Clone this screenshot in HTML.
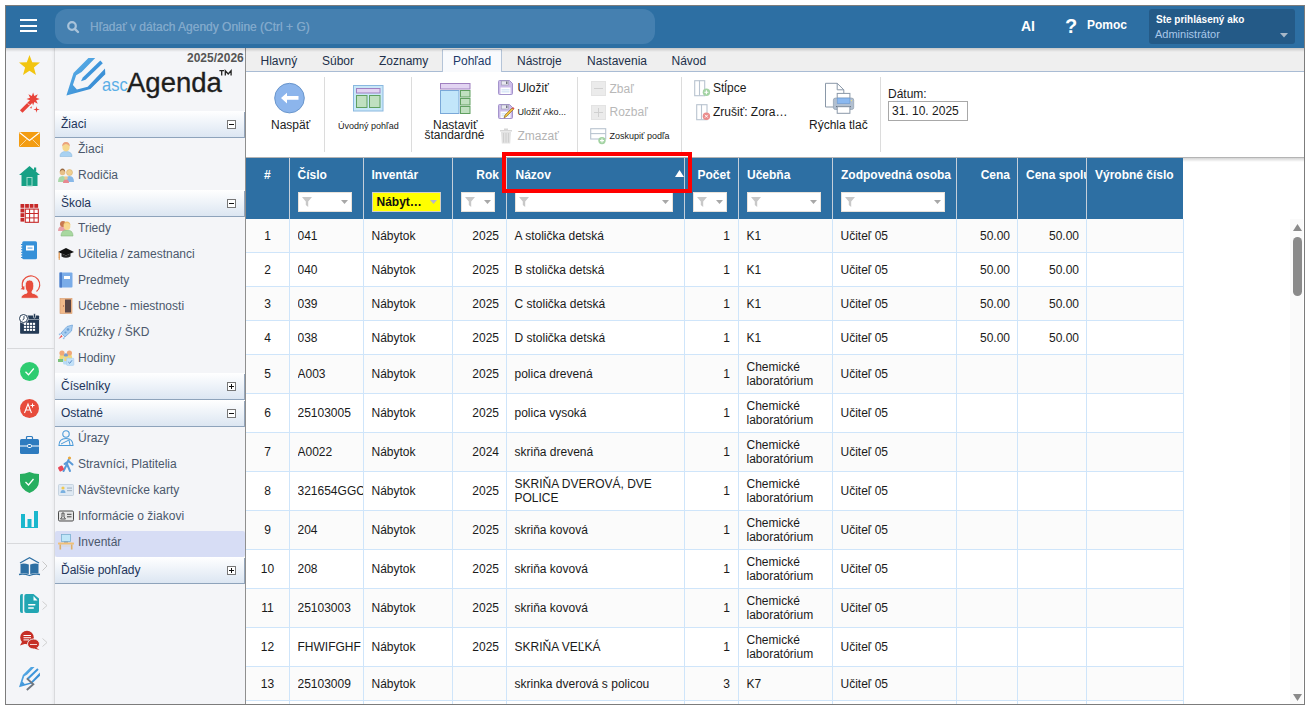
<!DOCTYPE html><html><head><meta charset="utf-8"><style>
*{box-sizing:border-box;margin:0;padding:0}
html,body{width:1310px;height:710px;overflow:hidden;background:#fff;font-family:"Liberation Sans",sans-serif;font-size:12px;color:#222}
.a{position:absolute;white-space:nowrap}
#frame{position:absolute;left:5px;top:5px;width:1300px;height:700px;border:1px solid #7c7c7c;overflow:hidden;background:#fff}
svg{position:absolute;overflow:visible}
</style></head><body><div id="frame"><div class="a" style="left:0px;top:0px;width:1298px;height:42px;background:#2d6fa3"></div>
<div class="a" style="left:14px;top:13px;width:17px;height:2px;background:#fff"></div>
<div class="a" style="left:14px;top:19px;width:17px;height:2px;background:#fff"></div>
<div class="a" style="left:14px;top:24px;width:17px;height:2px;background:#fff"></div>
<div class="a" style="left:49px;top:3px;width:600px;height:35px;background:#4580b0;border-radius:12px"></div>
<svg style="left:61px;top:15px" width="12" height="12" viewBox="0 0 12 12"><circle cx="5" cy="5" r="3.8" fill="none" stroke="#a9c3da" stroke-width="2.2"/><line x1="7.8" y1="7.8" x2="11" y2="11" stroke="#a9c3da" stroke-width="2.4" stroke-linecap="round"/></svg>
<div class="a" style="left:84.00px;top:13.00px;font-size:12px;line-height:16px;color:#80a8cb;text-shadow:0 0 .4px #80a8cb">Hľadať v dátach Agendy Online (Ctrl + G)</div>
<div class="a" style="left:1015.00px;top:11.00px;font-size:14px;line-height:18px;color:#fff;font-weight:bold;">AI</div>
<div class="a" style="left:1059.00px;top:8.00px;font-size:20px;line-height:24px;color:#fff;font-weight:bold;">?</div>
<div class="a" style="left:1081.00px;top:11.00px;font-size:12px;line-height:16px;color:#fff;font-weight:bold;">Pomoc</div>
<div class="a" style="left:1143px;top:3px;width:146px;height:35px;background:#245a87;border-radius:3px"></div>
<div class="a" style="left:1150.00px;top:6.80px;font-size:10px;line-height:14px;color:#fff;font-weight:bold;">Ste prihlásený ako</div>
<div class="a" style="left:1149.00px;top:20.80px;font-size:11px;line-height:15px;color:#a9c8ea;">Administrátor</div>
<svg style="left:1274px;top:27px" width="8" height="5" viewBox="0 0 8 5"><path d="M0 0H8L4 4.5Z" fill="#a8b8c8"/></svg>
<div class="a" style="left:0px;top:42px;width:48px;height:656px;background:#f4f5f8"></div>
<div class="a" style="left:45px;top:42px;width:3px;height:656px;background:linear-gradient(90deg,rgba(0,0,0,0),rgba(0,0,0,.035))"></div>
<div class="a" style="left:48px;top:42px;width:1px;height:656px;background:#d9dadd"></div>
<div class="a" style="left:1px;top:342px;width:47px;height:1px;background:#d8d9dc"></div>
<div class="a" style="left:1px;top:537px;width:47px;height:1px;background:#d8d9dc"></div>
<svg style="left:13px;top:49px" width="21" height="20" viewBox="0 0 21 20"><path d="M10.5 0 L13.2 7.2 L21 7.6 L14.9 12.5 L17 20 L10.5 15.8 L4 20 L6.1 12.5 L0 7.6 L7.8 7.2Z" fill="#f2c511"/></svg>
<svg style="left:13px;top:86px" width="22" height="22" viewBox="0 0 22 22"><path d="M14.10 0.40 L15.36 3.95 L18.77 2.33 L17.15 5.74 L20.70 7.00 L17.15 8.26 L18.77 11.67 L15.36 10.05 L14.10 13.60 L12.84 10.05 L9.43 11.67 L11.05 8.26 L7.50 7.00 L11.05 5.74 L9.43 2.33 L12.84 3.95Z" fill="#e8433a"/><path d="M17.50 14.30 L18.14 16.86 L20.70 17.50 L18.14 18.14 L17.50 20.70 L16.86 18.14 L14.30 17.50 L16.86 16.86Z" fill="#e8433a"/><path d="M11 15.5 L13.2 14.2 L12.2 16.8Z" fill="#e8433a"/><path d="M2.2 19.5 L12.5 9.2" stroke="#e8433a" stroke-width="3.6" stroke-linecap="butt"/><path d="M8.8 11.4 L10.7 13.3" stroke="#f4f5f8" stroke-width="0.9"/></svg>
<svg style="left:13px;top:126px" width="21" height="15" viewBox="0 0 21 15"><rect x="0" y="0" width="21" height="15" fill="#f39c12"/><path d="M0.5 0.5 L10.5 8.5 L20.5 0.5" stroke="#fff" stroke-width="1.1" fill="none"/><path d="M0.5 14.5 L7.5 7.5 M20.5 14.5 L13.5 7.5" stroke="#fde3b8" stroke-width=".8" fill="none"/></svg>
<svg style="left:13px;top:160px" width="21" height="20" viewBox="0 0 21 20"><path d="M10.5 0 L21 9 L18.5 9 L18.5 20 L2.5 20 L2.5 9 L0 9Z" fill="#16a085"/><rect x="15" y="1.5" width="2.2" height="4" fill="#16a085"/><rect x="8" y="11.5" width="5" height="8.5" fill="none" stroke="#9fdccc" stroke-width="1"/></svg>
<svg style="left:14px;top:198px" width="19" height="19" viewBox="0 0 19 19"><g fill="#c62828"><rect x="0.5" y="0" width="3.8" height="3.8"/><rect x="5.1" y="0" width="3.8" height="3.8"/><rect x="9.7" y="0" width="3.8" height="3.8"/><rect x="14.3" y="0" width="3.8" height="3.8"/><rect x="0.5" y="4.6" width="3.8" height="3.8"/><rect x="0.5" y="9.2" width="3.8" height="3.8"/><rect x="0.5" y="13.8" width="3.8" height="3.8"/></g><rect x="5.3" y="5.1" width="13" height="13.2" fill="#fff" stroke="#c62828" stroke-width="1.1"/><path d="M9.6 5 V18.3 M14 5 V18.3 M5.3 9.5 H18.3 M5.3 13.9 H18.3" stroke="#c62828" stroke-width="1"/></svg>
<svg style="left:15px;top:235px" width="17" height="19" viewBox="0 0 17 19"><rect x="1.2" y="0.3" width="14.8" height="18" rx="1.5" fill="#3590d8"/><rect x="0" y="3.0" width="3" height="1" fill="#3590d8"/><rect x="0" y="5.6" width="3" height="1" fill="#3590d8"/><rect x="0" y="8.2" width="3" height="1" fill="#3590d8"/><rect x="0" y="10.8" width="3" height="1" fill="#3590d8"/><rect x="0" y="13.4" width="3" height="1" fill="#3590d8"/><rect x="0" y="16.0" width="3" height="1" fill="#3590d8"/><rect x="5" y="4.5" width="8" height="5" fill="#fff"/><rect x="6.5" y="6.3" width="5" height="1.6" fill="#8fc0ea"/></svg>
<svg style="left:14px;top:270px" width="20" height="23" viewBox="0 0 20 23"><path d="M3.6 13.5 A8.8 8.8 0 1 1 16.5 15.5" stroke="#e74c3c" stroke-width="1.2" fill="none"/><path d="M0.5 13.3 L4.5 13.5 L4.3 9.8Z" fill="#e74c3c"/><path d="M5.2 10 Q5.2 4 9.5 4 Q13.8 4 13.8 10 Q13.8 13.5 12 15.5 L12 17 Q18.5 18.5 18.5 22.3 L1 22.3 Q1 18.5 7 17 L7 15.5 Q5.2 13.5 5.2 10Z" fill="#e74c3c" stroke="#f4f5f8" stroke-width=".8"/></svg>
<svg style="left:13px;top:307px" width="21" height="21" viewBox="0 0 21 21"><rect x="1.1" y="2.5" width="19" height="18.3" rx="0.8" fill="#243a55"/><rect x="1" y="6" width="19.5" height="1" fill="#8a96a5"/><rect x="4.9" y="9.8" width="2.2" height="2.1" fill="#fff"/><rect x="7.9" y="9.8" width="2.2" height="2.1" fill="#fff"/><rect x="10.9" y="9.8" width="2.2" height="2.1" fill="#fff"/><rect x="13.9" y="9.8" width="2.2" height="2.1" fill="#fff"/><rect x="4.9" y="12.8" width="2.2" height="2.1" fill="#fff"/><rect x="7.9" y="12.8" width="2.2" height="2.1" fill="#fff"/><rect x="10.9" y="12.8" width="2.2" height="2.1" fill="#fff"/><rect x="13.9" y="12.8" width="2.2" height="2.1" fill="#fff"/><rect x="4.9" y="15.8" width="2.2" height="2.1" fill="#fff"/><rect x="7.9" y="15.8" width="2.2" height="2.1" fill="#fff"/><rect x="10.9" y="15.8" width="2.2" height="2.1" fill="#fff"/><rect x="13.9" y="15.8" width="2.2" height="2.1" fill="#fff"/><rect x="14.5" y="0.6" width="2" height="4.5" rx="1" fill="#243a55" stroke="#fff" stroke-width=".6"/><circle cx="4.5" cy="5.5" r="5" fill="#fff"/><circle cx="4.5" cy="5.5" r="4" fill="#fff" stroke="#243a55" stroke-width="1"/><path d="M5 3 V6 L3.5 7" stroke="#243a55" stroke-width=".9" fill="none"/></svg>
<svg style="left:14px;top:356px" width="19" height="19" viewBox="0 0 19 19"><circle cx="9.5" cy="9.5" r="9.5" fill="#2ecc71"/><path d="M5.5 9.8 L8.5 12.8 L13.8 6.5" stroke="#fff" stroke-width="1.3" fill="none"/></svg>
<svg style="left:14px;top:393px" width="19" height="19" viewBox="0 0 19 19"><circle cx="9.5" cy="9.5" r="9.5" fill="#e74c3c"/><path d="M4.5 14 L8 5 L11.5 14 M6 11 H10" stroke="#fff" stroke-width="1.1" fill="none"/><path d="M12.5 4.5 V8.5 M10.5 6.5 H14.5" stroke="#fff" stroke-width="1" fill="none"/></svg>
<svg style="left:14px;top:430px" width="19" height="18" viewBox="0 0 19 18"><path d="M6.5 3.5 V1.5 Q6.5 0.5 7.5 0.5 H11.5 Q12.5 0.5 12.5 1.5 V3.5" stroke="#2e7bbf" stroke-width="1.2" fill="none"/><rect x="0" y="3" width="19" height="15" rx="1.5" fill="#2e7bbf"/><path d="M0 10 H19" stroke="#fff" stroke-width="1"/><rect x="7.5" y="8.5" width="4" height="3" rx="1.2" fill="#2e7bbf" stroke="#fff" stroke-width="1"/></svg>
<svg style="left:14px;top:466px" width="19" height="21" viewBox="0 0 19 21"><path d="M9.5 0 Q14 2 19 2 L19 9 Q19 17 9.5 21 Q0 17 0 9 L0 2 Q5 2 9.5 0Z" fill="#27ae60"/><path d="M5.5 10 L8.5 13 L13.5 7" stroke="#fff" stroke-width="1.3" fill="none"/></svg>
<svg style="left:15px;top:505px" width="17" height="17" viewBox="0 0 17 17"><rect x="0" y="3" width="4" height="14" fill="#1ab7cd"/><rect x="6.5" y="8" width="4" height="9" fill="#1ab7cd"/><rect x="13" y="0" width="4" height="17" fill="#1ab7cd"/><rect x="0" y="16" width="17" height="1" fill="#1ab7cd"/></svg>
<svg style="left:13px;top:551px" width="21" height="19" viewBox="0 0 21 19"><path d="M1 6 L10.5 0.8 L20 6" stroke="#2d6fa3" stroke-width="1.2" fill="none"/><path d="M1.5 7 Q5 6 9.8 7.5 V17 Q5 15.8 1.5 16.5Z" fill="#2d6fa3"/><path d="M19.5 7 Q16 6 11.2 7.5 V17 Q16 15.8 19.5 16.5Z" fill="#2d6fa3"/><path d="M0 17.5 Q5 16.5 10.5 18.5 Q16 16.5 21 17.5" stroke="#2d6fa3" stroke-width="1.3" fill="none"/></svg>
<svg style="left:36px;top:555px" width="6" height="10" viewBox="0 0 6 10"><path d="M0.5 0.5 L5 5 L0.5 9.5" stroke="#c8c8c8" stroke-width="1" fill="none"/></svg>
<svg style="left:14px;top:588px" width="20" height="19" viewBox="0 0 20 19"><path d="M2.8 0 H1.8 Q0 0 0 2 V17 Q0 19 1.8 19 H2.8Z" fill="#22a6b3"/><path d="M4.3 2 Q4.3 0 6.3 0 H13.5 L19 4.5 V17 Q19 19 17 19 H6.3 Q4.3 19 4.3 17Z" fill="#22a6b3"/><path d="M13.5 2 V6.5 H17.5Z" fill="#fff"/><rect x="8" y="10" width="7.5" height="1.5" rx=".7" fill="#fff"/><rect x="8" y="13.3" width="6" height="1.5" rx=".7" fill="#fff"/></svg>
<svg style="left:36px;top:595px" width="6" height="9" viewBox="0 0 6 9"><path d="M0.5 0.5 L5 4.5 L0.5 8.5" stroke="#d0d0d0" stroke-width="1" fill="none"/></svg>
<svg style="left:14px;top:625px" width="20" height="20" viewBox="0 0 20 20"><circle cx="7" cy="6.5" r="6.8" fill="#c62f26"/><path d="M0 14.5 L2.5 10 L6 12.5Z" fill="#c62f26"/><ellipse cx="13.5" cy="13" rx="6" ry="5" fill="#c62f26" stroke="#f4f5f8" stroke-width=".9"/><path d="M19.5 19 L16 16.5 L14 17.5Z" fill="#c62f26"/><rect x="3.5" y="4" width="7.5" height="1" fill="#fff"/><rect x="3.5" y="6.2" width="7.5" height="1" fill="#fff"/><rect x="3.5" y="8.4" width="5.5" height="1" fill="#fff"/><rect x="10" y="13" width="7" height="1" fill="#fff" opacity=".8"/></svg>
<svg style="left:36px;top:632px" width="6" height="9" viewBox="0 0 6 9"><path d="M0.5 0.5 L5 4.5 L0.5 8.5" stroke="#d0d0d0" stroke-width="1" fill="none"/></svg>
<svg style="left:6px;top:657px" width="32" height="32" viewBox="0 0 32 32"><g transform="translate(3.544 0.656) scale(0.54)"><path d="M6.4 43.6 L13.5 21 L28.4 6.1 L35.2 6.1 L21.6 20 L16.2 23.2 L12.9 33.1 L16.9 37.5 L27.7 34.8 L45 16.6 L45.3 22.3 L30.4 36.9 Z" fill="url(#pg)"/><path d="M40.3 8.6 L42.8 11.2 L25.5 27.8 L21 29.2 L22.8 25.4 Z" fill="#3d95db"/></g><path d="M14.8 15.4 L21.3 21.3 L14.8 27" stroke="#6f7780" stroke-width="1.9" fill="none"/></svg>
<div class="a" style="left:49px;top:42px;width:190px;height:656px;background:#f4f5f8"></div>
<div class="a" style="left:239px;top:42px;width:1px;height:656px;background:#8f8f8f"></div>
<div class="a" style="left:181.00px;top:43.80px;font-size:12px;line-height:16px;color:#555;font-weight:bold;">2025/2026</div>
<svg style="left:54px;top:46px" width="50" height="46" viewBox="0 0 50 46"><defs><linearGradient id="pg" x1="0" y1="0" x2="1" y2="1"><stop offset="0" stop-color="#62b6ec"/><stop offset="1" stop-color="#2a7fcc"/></linearGradient></defs><path d="M6.4 43.6 L13.5 21 L28.4 6.1 L35.2 6.1 L21.6 20 L16.2 23.2 L12.9 33.1 L16.9 37.5 L27.7 34.8 L45 16.6 L45.3 22.3 L30.4 36.9 Z" fill="url(#pg)"/><path d="M40.3 8.6 L42.8 11.2 L25.5 27.8 L21 29.2 L22.8 25.4 Z" fill="#3d95db"/></svg>
<div class="a" style="left:96.00px;top:69.35px;font-size:16.5px;line-height:20.5px;color:#5aaee6;transform:scaleY(1.08);transform-origin:0 80%">asc</div>
<div class="a" style="left:121.00px;top:59.55px;font-size:28.5px;line-height:32.5px;color:#1e1e1e;transform:scaleX(0.965);transform-origin:0 0;-webkit-text-stroke:0.35px #1e1e1e">Agenda</div>
<svg style="left:213px;top:64px" width="14" height="6" viewBox="0 0 14 6"><path d="M0.4 0.6 H5 M2.7 0.6 V5.4" stroke="#222" stroke-width="1.3"/><path d="M6.3 5.4 V0.8 L9.2 4 L12.1 0.8 V5.4" stroke="#222" stroke-width="1.3" fill="none"/></svg>
<div class="a" style="left:49px;top:105px;width:190px;height:27px;border-bottom:1px solid #8ea3bb;background:linear-gradient(#ffffff,#dce6f2)"></div>
<div class="a" style="left:55.00px;top:109.80px;font-size:12px;line-height:16px;color:#22345a;">Žiaci</div>
<div class="a" style="left:238px;top:106px;width:1px;height:26px;background:#95a6bb"></div>
<div class="a" style="left:221px;top:114px;width:9px;height:9px;border:1px solid #777;background:#fff"></div>
<div class="a" style="left:223px;top:118px;width:5px;height:1px;background:#111"></div>
<div class="a" style="left:72.00px;top:134.70px;font-size:12px;line-height:16px;color:#4b586c;">Žiaci</div>
<svg style="left:52px;top:135px" width="16" height="16" viewBox="0 0 16 16"><path d="M2 15.5 Q2 10.5 8 10.5 Q14 10.5 14 15.5Z" fill="#a9d2f2" stroke="#8cb8de" stroke-width=".6"/><ellipse cx="8" cy="6" rx="3.6" ry="4.4" fill="#f6d88e"/><path d="M4.3 5.5 Q4 1 8 1 Q12 1 11.7 5.5 Q10.5 3 8 3 Q5.5 3 4.3 5.5Z" fill="#eaa27e"/></svg>
<div class="a" style="left:72.00px;top:160.70px;font-size:12px;line-height:16px;color:#4b586c;">Rodičia</div>
<svg style="left:52px;top:161px" width="16" height="16" viewBox="0 0 16 16"><path d="M0 15 Q0 9 4.5 9 Q9 9 9 15Z" fill="#a8d8a8"/><circle cx="4.5" cy="5.5" r="2.8" fill="#e8c088"/><path d="M1.8 5 Q2 1.5 4.5 1.5 Q7 1.5 7.2 5 Q6 3 4.5 3 Q3 3 1.8 5Z" fill="#9a6a40"/><path d="M7 15 Q7 9 11.5 9 Q16 9 16 15Z" fill="#88b8e8"/><circle cx="11.5" cy="5.5" r="3" fill="#f0d090" stroke="#d8b070" stroke-width=".6"/><path d="M5 16 Q5 12.5 8 12.5 Q11 12.5 11 16Z" fill="#e88890"/><circle cx="8" cy="11" r="1.8" fill="#f0c890"/></svg>
<div class="a" style="left:49px;top:184px;width:190px;height:27px;border-bottom:1px solid #8ea3bb;background:linear-gradient(#ffffff,#dce6f2)"></div>
<div class="a" style="left:55.00px;top:188.80px;font-size:12px;line-height:16px;color:#22345a;">Škola</div>
<div class="a" style="left:238px;top:185px;width:1px;height:26px;background:#95a6bb"></div>
<div class="a" style="left:221px;top:193px;width:9px;height:9px;border:1px solid #777;background:#fff"></div>
<div class="a" style="left:223px;top:197px;width:5px;height:1px;background:#111"></div>
<div class="a" style="left:72.00px;top:213.70px;font-size:12px;line-height:16px;color:#4b586c;">Triedy</div>
<svg style="left:52px;top:214px" width="16" height="16" viewBox="0 0 16 16"><path d="M0 11 Q0 6 5 6 Q9 6 9 11Z" fill="#e8a0a8"/><circle cx="5" cy="4" r="3" fill="#c87850"/><path d="M3 16 Q3 10 9 10 Q15 10 15 16Z" fill="#a8d8a0" stroke="#88b880" stroke-width=".6"/><ellipse cx="9" cy="6" rx="3.4" ry="4" fill="#f8d890"/><path d="M5.6 5 Q6 1.5 9 1.5 Q12 1.5 12.4 5 Q11 3 9 3 Q7 3 5.6 5Z" fill="#f0c070"/></svg>
<div class="a" style="left:72.00px;top:239.70px;font-size:12px;line-height:16px;color:#4b586c;">Učitelia / zamestnanci</div>
<svg style="left:52px;top:240px" width="16" height="16" viewBox="0 0 16 16"><path d="M0 6 L8 2 L16 6 L8 9.5Z" fill="#111"/><path d="M3.5 7.5 V10.5 Q8 13 12.5 10.5 V7.5 L8 9.5Z" fill="#222"/><path d="M1.2 6.5 V11.5" stroke="#e09040" stroke-width="1.2"/><path d="M0.6 11 L1.8 11 L1.6 14 L0.8 14Z" fill="#e09040"/></svg>
<div class="a" style="left:72.00px;top:265.70px;font-size:12px;line-height:16px;color:#4b586c;">Predmety</div>
<svg style="left:52px;top:266px" width="16" height="16" viewBox="0 0 16 16"><rect x="1.5" y="0.5" width="13" height="15" rx="1" fill="#7aace8"/><rect x="1.5" y="0.5" width="2.5" height="15" fill="#4a7cc8"/><rect x="6" y="4" width="6" height="3" fill="#fff"/></svg>
<div class="a" style="left:72.00px;top:291.70px;font-size:12px;line-height:16px;color:#4b586c;">Učebne - miestnosti</div>
<svg style="left:52px;top:292px" width="16" height="16" viewBox="0 0 16 16"><rect x="2" y="0.5" width="12" height="15" fill="#f2b98a" stroke="#d89868" stroke-width=".6"/><rect x="7" y="1.5" width="6" height="13" fill="#5a4545"/><rect x="5" y="7" width="1" height="2" fill="#c08060"/></svg>
<div class="a" style="left:72.00px;top:317.70px;font-size:12px;line-height:16px;color:#4b586c;">Krúžky / ŠKD</div>
<svg style="left:52px;top:318px" width="16" height="16" viewBox="0 0 16 16"><path d="M14.5 1 L9 2.5 L3 9 L7 13 L13.5 7Z" fill="#a8cdf0" stroke="#6aa0d8" stroke-width=".7"/><path d="M3 9 L0.5 10 L2 11.5Z M7 13 L6 15.5 L4.5 14Z" fill="#88b8e8"/><circle cx="10" cy="5.5" r="1.3" fill="#6aa0d8"/><circle cx="7.5" cy="8.5" r="1.1" fill="#6aa0d8"/><path d="M3.5 11 L0.5 15 L4.5 12.5Z" fill="#e84848"/></svg>
<div class="a" style="left:72.00px;top:343.70px;font-size:12px;line-height:16px;color:#4b586c;">Hodiny</div>
<svg style="left:52px;top:344px" width="16" height="16" viewBox="0 0 16 16"><rect x="1.5" y="4.5" width="5" height="6" rx="2" fill="#f2d97a"/><rect x="9" y="4.5" width="5" height="6" rx="2" fill="#f2d97a"/><circle cx="4" cy="3" r="2.6" fill="#f0a878"/><circle cx="11.4" cy="3" r="2.6" fill="#f0a878"/><rect x="0" y="9" width="6" height="3" fill="#7cc27c"/><rect x="5" y="7.5" width="6" height="7" rx="1.5" fill="#b8dcf6"/><circle cx="7.9" cy="5.3" r="2" fill="#7a9cc8"/><rect x="6.3" y="6.5" width="3.2" height="4.5" fill="#f2d97a"/><rect x="8.6" y="8.2" width="7.2" height="7.2" rx=".8" fill="#c4e2f8" stroke="#a8cdee" stroke-width=".6"/><path d="M10.3 12 L11.7 13.3 L14 10.3" stroke="#5a8ac8" stroke-width="1" fill="none"/></svg>
<div class="a" style="left:49px;top:367px;width:190px;height:27px;border-bottom:1px solid #8ea3bb;background:linear-gradient(#ffffff,#dce6f2)"></div>
<div class="a" style="left:55.00px;top:371.80px;font-size:12px;line-height:16px;color:#22345a;">Číselníky</div>
<div class="a" style="left:238px;top:368px;width:1px;height:26px;background:#95a6bb"></div>
<div class="a" style="left:221px;top:376px;width:9px;height:9px;border:1px solid #777;background:#fff"></div>
<div class="a" style="left:223px;top:380px;width:5px;height:1px;background:#111"></div>
<div class="a" style="left:225px;top:378px;width:1px;height:5px;background:#111"></div>
<div class="a" style="left:49px;top:394px;width:190px;height:27px;border-bottom:1px solid #8ea3bb;background:linear-gradient(#ffffff,#dce6f2)"></div>
<div class="a" style="left:55.00px;top:398.80px;font-size:12px;line-height:16px;color:#22345a;">Ostatné</div>
<div class="a" style="left:238px;top:395px;width:1px;height:26px;background:#95a6bb"></div>
<div class="a" style="left:221px;top:403px;width:9px;height:9px;border:1px solid #777;background:#fff"></div>
<div class="a" style="left:223px;top:407px;width:5px;height:1px;background:#111"></div>
<div class="a" style="left:72.00px;top:423.70px;font-size:12px;line-height:16px;color:#4b586c;">Úrazy</div>
<svg style="left:52px;top:424px" width="16" height="16" viewBox="0 0 16 16"><circle cx="8" cy="4" r="3.2" fill="none" stroke="#4a9ad8" stroke-width="1.1"/><path d="M1 15.5 Q1 8.5 8 8.5 Q15 8.5 15 15.5Z" fill="none" stroke="#4a9ad8" stroke-width="1.1"/><path d="M3 14 L11 10 L12 15" fill="none" stroke="#4a9ad8" stroke-width="1"/></svg>
<div class="a" style="left:72.00px;top:449.70px;font-size:12px;line-height:16px;color:#4b586c;">Stravníci, Platitelia</div>
<svg style="left:52px;top:450px" width="16" height="16" viewBox="0 0 16 16"><circle cx="11.5" cy="2" r="1.6" fill="#e8a840"/><path d="M10.5 4 L8 10 L5.5 15 M9 8 L12 15 M10.5 5 L14.5 8.5 M10 5.5 L6.5 8" stroke="#5a9ad8" stroke-width="2" fill="none" stroke-linecap="round"/><rect x="0.5" y="10" width="5" height="5" rx="1.2" transform="rotate(-30 3 12.5)" fill="#e84858"/></svg>
<div class="a" style="left:72.00px;top:475.70px;font-size:12px;line-height:16px;color:#4b586c;">Návštevnícke karty</div>
<svg style="left:52px;top:476px" width="16" height="16" viewBox="0 0 16 16"><rect x="0.5" y="2.5" width="15" height="11" rx="1" fill="#dfe9f3" stroke="#b8c8d8" stroke-width=".7"/><circle cx="5" cy="6" r="1.6" fill="#f0c850"/><path d="M2.5 11 Q2.5 8 5 8 Q7.5 8 7.5 11Z" fill="#7ab0e0"/><rect x="9" y="5.5" width="5" height="1.2" fill="#a8b8c8"/><rect x="9" y="8" width="5" height="1.2" fill="#a8b8c8"/></svg>
<div class="a" style="left:72.00px;top:501.70px;font-size:12px;line-height:16px;color:#4b586c;">Informácie o žiakovi</div>
<svg style="left:52px;top:502px" width="16" height="16" viewBox="0 0 16 16"><rect x="0.5" y="3" width="15" height="10" rx="1.2" fill="#e6e6e6" stroke="#4a4a4a" stroke-width="1"/><path d="M4 5 H6 V9 L7.5 11 H2.5 L4 9Z" fill="none" stroke="#444" stroke-width=".9"/><rect x="9" y="5.8" width="4.5" height="1" fill="#444"/><rect x="9" y="8.3" width="4.5" height="1" fill="#444"/></svg>
<div class="a" style="left:49px;top:525px;width:190px;height:26px;background:#d7ddf5;border-radius:2px"></div>
<div class="a" style="left:72.00px;top:527.70px;font-size:12px;line-height:16px;color:#4b586c;">Inventár</div>
<svg style="left:52px;top:528px" width="16" height="16" viewBox="0 0 16 16"><rect x="3.5" y="0.5" width="9" height="7" fill="#bfe6f8" stroke="#7ab0d0" stroke-width=".8"/><rect x="6" y="7.5" width="4" height="1.3" fill="#8aa0b0"/><rect x="0" y="8.5" width="16" height="2" rx=".6" fill="#f0c078"/><rect x="1.5" y="10.5" width="1.6" height="5" fill="#e0b068"/><rect x="12.9" y="10.5" width="1.6" height="5" fill="#e0b068"/><rect x="3" y="11.5" width="10" height="1" fill="#d8d8d8"/></svg>
<div class="a" style="left:49px;top:551px;width:190px;height:27px;border-bottom:1px solid #8ea3bb;background:linear-gradient(#ffffff,#dce6f2)"></div>
<div class="a" style="left:55.00px;top:555.80px;font-size:12px;line-height:16px;color:#22345a;">Ďalšie pohľady</div>
<div class="a" style="left:238px;top:552px;width:1px;height:26px;background:#95a6bb"></div>
<div class="a" style="left:221px;top:560px;width:9px;height:9px;border:1px solid #777;background:#fff"></div>
<div class="a" style="left:223px;top:564px;width:5px;height:1px;background:#111"></div>
<div class="a" style="left:225px;top:562px;width:1px;height:5px;background:#111"></div>
<div class="a" style="left:240px;top:42px;width:1058px;height:23px;background:#efefef"></div>
<div class="a" style="left:240px;top:65px;width:1058px;height:1px;background:#a9bcd4"></div>
<div class="a" style="left:436px;top:43px;width:60px;height:23px;background:#f8fafd;border:1px solid #b4c4d8;border-bottom:none"></div>
<div class="a" style="left:254.50px;top:47.00px;font-size:12px;line-height:16px;color:#22304a;">Hlavný</div>
<div class="a" style="left:316.00px;top:47.00px;font-size:12px;line-height:16px;color:#22304a;">Súbor</div>
<div class="a" style="left:373.00px;top:47.00px;font-size:12px;line-height:16px;color:#22304a;">Zoznamy</div>
<div class="a" style="left:447.00px;top:47.00px;font-size:12px;line-height:16px;color:#1c3a6a;">Pohľad</div>
<div class="a" style="left:511.00px;top:47.00px;font-size:12px;line-height:16px;color:#22304a;">Nástroje</div>
<div class="a" style="left:581.00px;top:47.00px;font-size:12px;line-height:16px;color:#22304a;">Nastavenia</div>
<div class="a" style="left:665.50px;top:47.00px;font-size:12px;line-height:16px;color:#22304a;">Návod</div>
<div class="a" style="left:240px;top:66px;width:1058px;height:85px;background:#fff"></div>
<div class="a" style="left:240px;top:151px;width:1058px;height:1px;background:#b4b4b4"></div>
<div class="a" style="left:240px;top:152px;width:1058px;height:4px;background:linear-gradient(rgba(0,0,0,.17),rgba(0,0,0,0))"></div>
<div class="a" style="left:318px;top:71px;width:1px;height:75px;background:#dcdcdc"></div>
<div class="a" style="left:405px;top:71px;width:1px;height:75px;background:#dcdcdc"></div>
<div class="a" style="left:571px;top:71px;width:1px;height:75px;background:#dcdcdc"></div>
<div class="a" style="left:675px;top:71px;width:1px;height:75px;background:#dcdcdc"></div>
<div class="a" style="left:874px;top:71px;width:1px;height:75px;background:#dcdcdc"></div>
<svg style="left:268px;top:76px" width="32" height="33" viewBox="0 0 32 33"><g transform="translate(0 .6)"><circle cx="15.5" cy="15.5" r="14.8" fill="#8cb5ec" stroke="#6a96cc" stroke-width="1"/><path d="M7 15.5 L13 10.2 V13.5 H24.5 V17.2 H13 V20.8Z" fill="#fff"/></g></svg>
<div class="a" style="left:265.00px;top:110.50px;font-size:12px;line-height:16px;color:#222;">Naspäť</div>
<svg style="left:347px;top:79px" width="31" height="26" viewBox="0 0 31 26"><rect x="0.5" y="0.5" width="29.5" height="25.5" fill="#c9e8f8" stroke="#8ab8e0" stroke-width="1"/><rect x="3.5" y="3.5" width="23.5" height="4.5" fill="#e2d4f2" stroke="#a080c0" stroke-width="1"/><rect x="3.5" y="10.5" width="10.5" height="12" fill="#c0e0c0" stroke="#60a060" stroke-width="1"/><rect x="16.5" y="10.5" width="10.5" height="12" fill="#c0e0c0" stroke="#60a060" stroke-width="1"/></svg>
<div class="a" style="left:332.00px;top:114.00px;font-size:9px;line-height:13px;color:#222;">Úvodný pohľad</div>
<svg style="left:434px;top:77px" width="31" height="32" viewBox="0 0 31 32"><rect x="0.5" y="0.5" width="29.5" height="5.5" fill="#e2d4f2" stroke="#a080c0" stroke-width="1"/><rect x="0.5" y="7.5" width="18.5" height="23" fill="#c2e6fa" stroke="#7aa8d8" stroke-width="1"/><rect x="20.5" y="7.5" width="9.5" height="6.5" fill="#c0e0c0" stroke="#60a060" stroke-width="1"/><rect x="20.5" y="15.5" width="9.5" height="6.5" fill="#c0e0c0" stroke="#60a060" stroke-width="1"/><rect x="20.5" y="23.5" width="9.5" height="7" fill="#c0e0c0" stroke="#60a060" stroke-width="1"/></svg>
<div class="a" style="left:427.00px;top:110.50px;font-size:12px;line-height:16px;color:#222;">Nastaviť</div>
<div class="a" style="left:418.50px;top:120.70px;font-size:12px;line-height:16px;color:#222;">štandardné</div>
<svg style="left:492px;top:74px" width="16" height="16" viewBox="0 0 16 16"><path d="M0.5 1.5 Q0.5 0.5 1.5 0.5 H11.5 L14.5 3.5 V13.5 Q14.5 14.5 13.5 14.5 H1.5 Q0.5 14.5 0.5 13.5Z" fill="#cbbbe8" stroke="#a494cc" stroke-width="1"/><rect x="3.5" y="1" width="7" height="4" fill="#e8e8f0" stroke="#9a9ab0" stroke-width=".6"/><rect x="8" y="1.5" width="1.5" height="2.5" fill="#707080"/><rect x="2.5" y="7.5" width="10" height="6.5" fill="#fff"/><rect x="3.5" y="9.5" width="8" height=".8" fill="#b8d4f0"/><rect x="3.5" y="11.5" width="8" height=".8" fill="#b8d4f0"/></svg>
<div class="a" style="left:511.50px;top:74.00px;font-size:12px;line-height:16px;color:#1a1a1a;">Uložiť</div>
<svg style="left:492px;top:98px" width="16" height="16" viewBox="0 0 16 16"><path d="M0.5 1.5 Q0.5 0.5 1.5 0.5 H11.5 L14.5 3.5 V13.5 Q14.5 14.5 13.5 14.5 H1.5 Q0.5 14.5 0.5 13.5Z" fill="#cbbbe8" stroke="#a494cc" stroke-width="1"/><rect x="3.5" y="1" width="7" height="4" fill="#e8e8f0" stroke="#9a9ab0" stroke-width=".6"/><rect x="8" y="1.5" width="1.5" height="2.5" fill="#707080"/><rect x="2.5" y="7.5" width="10" height="6.5" fill="#fff"/><rect x="3.5" y="9.5" width="8" height=".8" fill="#b8d4f0"/><rect x="3.5" y="11.5" width="8" height=".8" fill="#b8d4f0"/><path d="M6 14 L7 11 L14 4 L15.5 5.5 L8.5 12.5Z" fill="#f0c040" stroke="#806020" stroke-width=".6"/><path d="M14 4 L15 3 L16.5 4.5 L15.5 5.5Z" fill="#e05050"/></svg>
<div class="a" style="left:511.50px;top:99.50px;font-size:9px;line-height:13px;color:#1a1a1a;">Uložiť Ako...</div>
<svg style="left:493px;top:122px" width="14" height="16" viewBox="0 0 14 16"><rect x="1" y="2" width="12" height="1.5" fill="#d6d6d6"/><rect x="5" y="0.5" width="4" height="1.5" fill="#d6d6d6"/><path d="M2 4 H12 L11.2 15.5 H2.8Z" fill="#e2e2e2"/><path d="M4.5 5 V14.5 M7 5 V14.5 M9.5 5 V14.5" stroke="#cacaca" stroke-width=".8"/></svg>
<div class="a" style="left:511.50px;top:122.00px;font-size:12px;line-height:16px;color:#b3b3b3;">Zmazať</div>
<div class="a" style="left:585px;top:75px;width:15px;height:15px;background:#ebebeb;border:1px solid #e3e3e3"></div>
<div class="a" style="left:588px;top:82px;width:9px;height:1px;background:#d0d0d0"></div>
<div class="a" style="left:603.50px;top:74.60px;font-size:12px;line-height:16px;color:#b8b8b8;">Zbaľ</div>
<div class="a" style="left:585px;top:99px;width:15px;height:15px;background:#ebebeb;border:1px solid #e3e3e3"></div>
<div class="a" style="left:588px;top:106px;width:9px;height:1px;background:#d0d0d0"></div>
<div class="a" style="left:592px;top:102px;width:1px;height:9px;background:#d0d0d0"></div>
<div class="a" style="left:603.50px;top:98.20px;font-size:12px;line-height:16px;color:#b8b8b8;">Rozbaľ</div>
<svg style="left:584px;top:122px" width="17" height="17" viewBox="0 0 17 17"><rect x="0.7" y="0.7" width="15" height="10.3" fill="#fff" stroke="#b9c4d0" stroke-width="1.1"/><path d="M0.5 5.6 H15.7" stroke="#b9c4d0" stroke-width="1.1"/><circle cx="12" cy="12.6" r="3.7" fill="#a3d3a3"/><path d="M12 10.6 V14.6 M10 12.6 H14" stroke="#fff" stroke-width="1.1"/></svg>
<div class="a" style="left:603.50px;top:123.50px;font-size:9px;line-height:13px;color:#1a1a1a;">Zoskupiť podľa</div>
<svg style="left:688px;top:74px" width="17" height="17" viewBox="0 0 17 17"><rect x="0.7" y="0.7" width="10" height="15" fill="#fff" stroke="#b9c4d0" stroke-width="1.1"/><path d="M5.5 0.5 V15.5" stroke="#b9c4d0" stroke-width="1.1"/><circle cx="12.4" cy="12.2" r="3.7" fill="#a3d3a3"/><path d="M12.4 10.2 V14.2 M10.4 12.2 H14.4" stroke="#fff" stroke-width="1.1"/></svg>
<div class="a" style="left:707.00px;top:73.50px;font-size:12px;line-height:16px;color:#1a1a1a;">Stĺpce</div>
<svg style="left:690px;top:98px" width="16" height="17" viewBox="0 0 16 17"><rect x="0.7" y="0.7" width="10.3" height="15" fill="#fff" stroke="#b9c4d0" stroke-width="1.1"/><path d="M5.5 0.5 V15.5" stroke="#b9c4d0" stroke-width="1.1"/><circle cx="10.4" cy="12.2" r="3.7" fill="#ea8c8c"/><path d="M9 10.8 L11.8 13.6 M11.8 10.8 L9 13.6" stroke="#fff" stroke-width="1"/></svg>
<div class="a" style="left:707.00px;top:98.00px;font-size:12px;line-height:16px;color:#1a1a1a;">Zrušiť: Zora…</div>
<svg style="left:818px;top:76px" width="31" height="32" viewBox="0 0 31 32"><path d="M1.5 1.3 H13.2 L19.8 7.8 V25 H1.5Z" fill="#fff" stroke="#8a98a8" stroke-width="1"/><path d="M13.2 1.3 V7.8 H19.8" fill="none" stroke="#8a98a8" stroke-width="1"/><rect x="13.2" y="11.4" width="12.7" height="5" fill="#fff" stroke="#8a98a8" stroke-width="1"/><rect x="9.4" y="16.1" width="20.3" height="11.4" rx="2" fill="#b1bfd0" stroke="#95a3b3" stroke-width=".8"/><rect x="13.2" y="16.1" width="12.7" height="5.4" fill="#8ab8f0" stroke="#6a98d0" stroke-width=".6"/><rect x="12" y="24" width="15" height="1" fill="#606a78"/><rect x="13.2" y="24.7" width="12.7" height="6.6" fill="#fff" stroke="#8a98a8" stroke-width="1"/><circle cx="27.4" cy="18.6" r=".7" fill="#f0e080"/></svg>
<div class="a" style="left:803.00px;top:111.30px;font-size:12px;line-height:16px;color:#1a1a1a;">Rýchla tlač</div>
<div class="a" style="left:882.00px;top:79.50px;font-size:12px;line-height:16px;color:#1a1a1a;">Dátum:</div>
<div class="a" style="left:882px;top:95px;width:80px;height:20px;background:#fff;border:1px solid #a8a8a8"></div>
<div class="a" style="left:886.00px;top:96.70px;font-size:12px;line-height:16px;color:#1a1a1a;">31. 10. 2025</div>
<div class="a" style="left:240px;top:152px;width:937px;height:61px;background:#2d6fa3"></div>
<div class="a" style="left:283px;top:152px;width:1px;height:61px;background:#c4cfda"></div>
<div class="a" style="left:357px;top:152px;width:1px;height:61px;background:#c4cfda"></div>
<div class="a" style="left:446px;top:152px;width:1px;height:61px;background:#c4cfda"></div>
<div class="a" style="left:500px;top:152px;width:1px;height:61px;background:#c4cfda"></div>
<div class="a" style="left:678px;top:152px;width:1px;height:61px;background:#c4cfda"></div>
<div class="a" style="left:732px;top:152px;width:1px;height:61px;background:#c4cfda"></div>
<div class="a" style="left:826px;top:152px;width:1px;height:61px;background:#c4cfda"></div>
<div class="a" style="left:950px;top:152px;width:1px;height:61px;background:#c4cfda"></div>
<div class="a" style="left:1011px;top:152px;width:1px;height:61px;background:#c4cfda"></div>
<div class="a" style="left:1080px;top:152px;width:1px;height:61px;background:#c4cfda"></div>
<div class="a" style="left:258.00px;top:160.80px;font-size:12px;line-height:16px;color:#fff;font-weight:bold;">#</div>
<div class="a" style="left:291.50px;top:160.80px;font-size:12px;line-height:16px;color:#fff;font-weight:bold;">Číslo</div>
<div class="a" style="left:365.50px;top:160.80px;font-size:12px;line-height:16px;color:#fff;font-weight:bold;">Inventár</div>
<div class="a" style="left:446.00px;top:160.80px;width:47px;text-align:right;font-size:12px;line-height:16px;color:#fff;font-weight:bold;">Rok</div>
<div class="a" style="left:509.50px;top:160.80px;font-size:12px;line-height:16px;color:#fff;font-weight:bold;">Názov</div>
<svg style="left:669px;top:164px" width="9" height="7" viewBox="0 0 9 7"><path d="M0 7 L4.5 0 L9 7Z" fill="#fff"/></svg>
<div class="a" style="left:691.50px;top:160.80px;font-size:12px;line-height:16px;color:#fff;font-weight:bold;">Počet</div>
<div class="a" style="left:741.00px;top:160.80px;font-size:12px;line-height:16px;color:#fff;font-weight:bold;">Učebňa</div>
<div class="a" style="left:835.00px;top:160.80px;font-size:12px;line-height:16px;color:#fff;font-weight:bold;">Zodpovedná osoba</div>
<div class="a" style="left:950.00px;top:160.80px;width:54px;text-align:right;font-size:12px;line-height:16px;color:#fff;font-weight:bold;">Cena</div>
<div class="a" style="left:1020.00px;top:160.80px;width:60px;text-align:left;font-size:12px;line-height:16px;color:#fff;font-weight:bold;overflow:hidden;">Cena spolu</div>
<div class="a" style="left:1089.00px;top:160.80px;font-size:12px;line-height:16px;color:#fff;font-weight:bold;">Výrobné číslo</div>
<div class="a" style="left:292px;top:186px;width:54px;height:20px;background:#fff;border:1px solid #e9e2da"></div>
<svg style="left:296px;top:191px" width="10" height="10" viewBox="0 0 10 10"><path d="M0 0 H10 L6.2 4.5 V10 L3.8 8 V4.5Z" fill="#c8c8c8"/></svg>
<svg style="left:335px;top:194px" width="7" height="4" viewBox="0 0 7 4"><path d="M0 0 H7 L3.5 4Z" fill="#a8a8a8"/></svg>
<div class="a" style="left:366px;top:186px;width:69px;height:20px;background:#ffff00;border:1px solid #d3cfc8"></div>
<div class="a" style="left:370.50px;top:187.80px;font-size:12px;line-height:16px;color:#111;font-weight:bold;">Nábyt…</div>
<svg style="left:424px;top:194px" width="7" height="4" viewBox="0 0 7 4"><path d="M0 0 H7 L3.5 4Z" fill="#b6b6c6"/></svg>
<div class="a" style="left:455px;top:186px;width:34px;height:20px;background:#fff;border:1px solid #e9e2da"></div>
<svg style="left:459px;top:191px" width="10" height="10" viewBox="0 0 10 10"><path d="M0 0 H10 L6.2 4.5 V10 L3.8 8 V4.5Z" fill="#c8c8c8"/></svg>
<svg style="left:478px;top:194px" width="7" height="4" viewBox="0 0 7 4"><path d="M0 0 H7 L3.5 4Z" fill="#a8a8a8"/></svg>
<div class="a" style="left:509px;top:186px;width:158px;height:20px;background:#fff;border:1px solid #e9e2da"></div>
<svg style="left:513px;top:191px" width="10" height="10" viewBox="0 0 10 10"><path d="M0 0 H10 L6.2 4.5 V10 L3.8 8 V4.5Z" fill="#c8c8c8"/></svg>
<svg style="left:656px;top:194px" width="7" height="4" viewBox="0 0 7 4"><path d="M0 0 H7 L3.5 4Z" fill="#a8a8a8"/></svg>
<div class="a" style="left:687px;top:186px;width:34px;height:20px;background:#fff;border:1px solid #e9e2da"></div>
<svg style="left:691px;top:191px" width="10" height="10" viewBox="0 0 10 10"><path d="M0 0 H10 L6.2 4.5 V10 L3.8 8 V4.5Z" fill="#c8c8c8"/></svg>
<svg style="left:710px;top:194px" width="7" height="4" viewBox="0 0 7 4"><path d="M0 0 H7 L3.5 4Z" fill="#a8a8a8"/></svg>
<div class="a" style="left:741px;top:186px;width:74px;height:20px;background:#fff;border:1px solid #e9e2da"></div>
<svg style="left:745px;top:191px" width="10" height="10" viewBox="0 0 10 10"><path d="M0 0 H10 L6.2 4.5 V10 L3.8 8 V4.5Z" fill="#c8c8c8"/></svg>
<svg style="left:804px;top:194px" width="7" height="4" viewBox="0 0 7 4"><path d="M0 0 H7 L3.5 4Z" fill="#a8a8a8"/></svg>
<div class="a" style="left:835px;top:186px;width:104px;height:20px;background:#fff;border:1px solid #e9e2da"></div>
<svg style="left:839px;top:191px" width="10" height="10" viewBox="0 0 10 10"><path d="M0 0 H10 L6.2 4.5 V10 L3.8 8 V4.5Z" fill="#c8c8c8"/></svg>
<svg style="left:928px;top:194px" width="7" height="4" viewBox="0 0 7 4"><path d="M0 0 H7 L3.5 4Z" fill="#a8a8a8"/></svg>
<div class="a" style="left:496px;top:146px;width:190px;height:41px;border:4px solid #ff0000"></div>
<div class="a" style="left:240px;top:213px;width:937px;height:33px;background:#fbfbfb"></div>
<div class="a" style="left:240px;top:246px;width:938px;height:1px;background:#cfe5fa"></div>
<div class="a" style="left:240.00px;top:221.80px;width:43px;text-align:center;font-size:12px;line-height:16px;color:#1a1a1a;">1</div>
<div class="a" style="left:291.50px;top:221.80px;width:65.5px;text-align:left;font-size:12px;line-height:16px;color:#1a1a1a;overflow:hidden;">041</div>
<div class="a" style="left:365.50px;top:221.80px;font-size:12px;line-height:16px;color:#1a1a1a;">Nábytok</div>
<div class="a" style="left:446.00px;top:221.80px;width:47px;text-align:right;font-size:12px;line-height:16px;color:#1a1a1a;">2025</div>
<div class="a" style="left:508.50px;top:221.80px;font-size:12px;line-height:16px;color:#1a1a1a;">A stolička detská</div>
<div class="a" style="left:678.00px;top:221.80px;width:46px;text-align:right;font-size:12px;line-height:16px;color:#1a1a1a;">1</div>
<div class="a" style="left:740.50px;top:221.80px;font-size:12px;line-height:16px;color:#1a1a1a;">K1</div>
<div class="a" style="left:834.50px;top:221.80px;font-size:12px;line-height:16px;color:#1a1a1a;">Učiteľ 05</div>
<div class="a" style="left:950.00px;top:221.80px;width:54px;text-align:right;font-size:12px;line-height:16px;color:#1a1a1a;">50.00</div>
<div class="a" style="left:1011.00px;top:221.80px;width:62px;text-align:right;font-size:12px;line-height:16px;color:#1a1a1a;">50.00</div>
<div class="a" style="left:240px;top:247px;width:937px;height:33px;background:#ffffff"></div>
<div class="a" style="left:240px;top:280px;width:938px;height:1px;background:#cfe5fa"></div>
<div class="a" style="left:240.00px;top:255.80px;width:43px;text-align:center;font-size:12px;line-height:16px;color:#1a1a1a;">2</div>
<div class="a" style="left:291.50px;top:255.80px;width:65.5px;text-align:left;font-size:12px;line-height:16px;color:#1a1a1a;overflow:hidden;">040</div>
<div class="a" style="left:365.50px;top:255.80px;font-size:12px;line-height:16px;color:#1a1a1a;">Nábytok</div>
<div class="a" style="left:446.00px;top:255.80px;width:47px;text-align:right;font-size:12px;line-height:16px;color:#1a1a1a;">2025</div>
<div class="a" style="left:508.50px;top:255.80px;font-size:12px;line-height:16px;color:#1a1a1a;">B stolička detská</div>
<div class="a" style="left:678.00px;top:255.80px;width:46px;text-align:right;font-size:12px;line-height:16px;color:#1a1a1a;">1</div>
<div class="a" style="left:740.50px;top:255.80px;font-size:12px;line-height:16px;color:#1a1a1a;">K1</div>
<div class="a" style="left:834.50px;top:255.80px;font-size:12px;line-height:16px;color:#1a1a1a;">Učiteľ 05</div>
<div class="a" style="left:950.00px;top:255.80px;width:54px;text-align:right;font-size:12px;line-height:16px;color:#1a1a1a;">50.00</div>
<div class="a" style="left:1011.00px;top:255.80px;width:62px;text-align:right;font-size:12px;line-height:16px;color:#1a1a1a;">50.00</div>
<div class="a" style="left:240px;top:281px;width:937px;height:33px;background:#fbfbfb"></div>
<div class="a" style="left:240px;top:314px;width:938px;height:1px;background:#cfe5fa"></div>
<div class="a" style="left:240.00px;top:289.80px;width:43px;text-align:center;font-size:12px;line-height:16px;color:#1a1a1a;">3</div>
<div class="a" style="left:291.50px;top:289.80px;width:65.5px;text-align:left;font-size:12px;line-height:16px;color:#1a1a1a;overflow:hidden;">039</div>
<div class="a" style="left:365.50px;top:289.80px;font-size:12px;line-height:16px;color:#1a1a1a;">Nábytok</div>
<div class="a" style="left:446.00px;top:289.80px;width:47px;text-align:right;font-size:12px;line-height:16px;color:#1a1a1a;">2025</div>
<div class="a" style="left:508.50px;top:289.80px;font-size:12px;line-height:16px;color:#1a1a1a;">C stolička detská</div>
<div class="a" style="left:678.00px;top:289.80px;width:46px;text-align:right;font-size:12px;line-height:16px;color:#1a1a1a;">1</div>
<div class="a" style="left:740.50px;top:289.80px;font-size:12px;line-height:16px;color:#1a1a1a;">K1</div>
<div class="a" style="left:834.50px;top:289.80px;font-size:12px;line-height:16px;color:#1a1a1a;">Učiteľ 05</div>
<div class="a" style="left:950.00px;top:289.80px;width:54px;text-align:right;font-size:12px;line-height:16px;color:#1a1a1a;">50.00</div>
<div class="a" style="left:1011.00px;top:289.80px;width:62px;text-align:right;font-size:12px;line-height:16px;color:#1a1a1a;">50.00</div>
<div class="a" style="left:240px;top:315px;width:937px;height:33px;background:#ffffff"></div>
<div class="a" style="left:240px;top:348px;width:938px;height:1px;background:#cfe5fa"></div>
<div class="a" style="left:240.00px;top:323.80px;width:43px;text-align:center;font-size:12px;line-height:16px;color:#1a1a1a;">4</div>
<div class="a" style="left:291.50px;top:323.80px;width:65.5px;text-align:left;font-size:12px;line-height:16px;color:#1a1a1a;overflow:hidden;">038</div>
<div class="a" style="left:365.50px;top:323.80px;font-size:12px;line-height:16px;color:#1a1a1a;">Nábytok</div>
<div class="a" style="left:446.00px;top:323.80px;width:47px;text-align:right;font-size:12px;line-height:16px;color:#1a1a1a;">2025</div>
<div class="a" style="left:508.50px;top:323.80px;font-size:12px;line-height:16px;color:#1a1a1a;">D stolička detská</div>
<div class="a" style="left:678.00px;top:323.80px;width:46px;text-align:right;font-size:12px;line-height:16px;color:#1a1a1a;">1</div>
<div class="a" style="left:740.50px;top:323.80px;font-size:12px;line-height:16px;color:#1a1a1a;">K1</div>
<div class="a" style="left:834.50px;top:323.80px;font-size:12px;line-height:16px;color:#1a1a1a;">Učiteľ 05</div>
<div class="a" style="left:950.00px;top:323.80px;width:54px;text-align:right;font-size:12px;line-height:16px;color:#1a1a1a;">50.00</div>
<div class="a" style="left:1011.00px;top:323.80px;width:62px;text-align:right;font-size:12px;line-height:16px;color:#1a1a1a;">50.00</div>
<div class="a" style="left:240px;top:349px;width:937px;height:38px;background:#fbfbfb"></div>
<div class="a" style="left:240px;top:387px;width:938px;height:1px;background:#cfe5fa"></div>
<div class="a" style="left:240.00px;top:360.30px;width:43px;text-align:center;font-size:12px;line-height:16px;color:#1a1a1a;">5</div>
<div class="a" style="left:291.50px;top:360.30px;width:65.5px;text-align:left;font-size:12px;line-height:16px;color:#1a1a1a;overflow:hidden;">A003</div>
<div class="a" style="left:365.50px;top:360.30px;font-size:12px;line-height:16px;color:#1a1a1a;">Nábytok</div>
<div class="a" style="left:446.00px;top:360.30px;width:47px;text-align:right;font-size:12px;line-height:16px;color:#1a1a1a;">2025</div>
<div class="a" style="left:508.50px;top:360.30px;font-size:12px;line-height:16px;color:#1a1a1a;">polica drevená</div>
<div class="a" style="left:678.00px;top:360.30px;width:46px;text-align:right;font-size:12px;line-height:16px;color:#1a1a1a;">1</div>
<div class="a" style="left:740.50px;top:353.40px;font-size:12px;line-height:16px;color:#1a1a1a;">Chemické</div>
<div class="a" style="left:740.50px;top:367.10px;font-size:12px;line-height:16px;color:#1a1a1a;">laboratórium</div>
<div class="a" style="left:834.50px;top:360.30px;font-size:12px;line-height:16px;color:#1a1a1a;">Učiteľ 05</div>
<div class="a" style="left:240px;top:388px;width:937px;height:38px;background:#ffffff"></div>
<div class="a" style="left:240px;top:426px;width:938px;height:1px;background:#cfe5fa"></div>
<div class="a" style="left:240.00px;top:399.30px;width:43px;text-align:center;font-size:12px;line-height:16px;color:#1a1a1a;">6</div>
<div class="a" style="left:291.50px;top:399.30px;width:65.5px;text-align:left;font-size:12px;line-height:16px;color:#1a1a1a;overflow:hidden;">25103005</div>
<div class="a" style="left:365.50px;top:399.30px;font-size:12px;line-height:16px;color:#1a1a1a;">Nábytok</div>
<div class="a" style="left:446.00px;top:399.30px;width:47px;text-align:right;font-size:12px;line-height:16px;color:#1a1a1a;">2025</div>
<div class="a" style="left:508.50px;top:399.30px;font-size:12px;line-height:16px;color:#1a1a1a;">polica vysoká</div>
<div class="a" style="left:678.00px;top:399.30px;width:46px;text-align:right;font-size:12px;line-height:16px;color:#1a1a1a;">1</div>
<div class="a" style="left:740.50px;top:392.40px;font-size:12px;line-height:16px;color:#1a1a1a;">Chemické</div>
<div class="a" style="left:740.50px;top:406.10px;font-size:12px;line-height:16px;color:#1a1a1a;">laboratórium</div>
<div class="a" style="left:834.50px;top:399.30px;font-size:12px;line-height:16px;color:#1a1a1a;">Učiteľ 05</div>
<div class="a" style="left:240px;top:427px;width:937px;height:38px;background:#fbfbfb"></div>
<div class="a" style="left:240px;top:465px;width:938px;height:1px;background:#cfe5fa"></div>
<div class="a" style="left:240.00px;top:438.30px;width:43px;text-align:center;font-size:12px;line-height:16px;color:#1a1a1a;">7</div>
<div class="a" style="left:291.50px;top:438.30px;width:65.5px;text-align:left;font-size:12px;line-height:16px;color:#1a1a1a;overflow:hidden;">A0022</div>
<div class="a" style="left:365.50px;top:438.30px;font-size:12px;line-height:16px;color:#1a1a1a;">Nábytok</div>
<div class="a" style="left:446.00px;top:438.30px;width:47px;text-align:right;font-size:12px;line-height:16px;color:#1a1a1a;">2024</div>
<div class="a" style="left:508.50px;top:438.30px;font-size:12px;line-height:16px;color:#1a1a1a;">skriňa drevená</div>
<div class="a" style="left:678.00px;top:438.30px;width:46px;text-align:right;font-size:12px;line-height:16px;color:#1a1a1a;">1</div>
<div class="a" style="left:740.50px;top:431.40px;font-size:12px;line-height:16px;color:#1a1a1a;">Chemické</div>
<div class="a" style="left:740.50px;top:445.10px;font-size:12px;line-height:16px;color:#1a1a1a;">laboratórium</div>
<div class="a" style="left:834.50px;top:438.30px;font-size:12px;line-height:16px;color:#1a1a1a;">Učiteľ 05</div>
<div class="a" style="left:240px;top:466px;width:937px;height:38px;background:#ffffff"></div>
<div class="a" style="left:240px;top:504px;width:938px;height:1px;background:#cfe5fa"></div>
<div class="a" style="left:240.00px;top:477.30px;width:43px;text-align:center;font-size:12px;line-height:16px;color:#1a1a1a;">8</div>
<div class="a" style="left:291.50px;top:477.30px;width:65.5px;text-align:left;font-size:12px;line-height:16px;color:#1a1a1a;overflow:hidden;">321654GGC</div>
<div class="a" style="left:365.50px;top:477.30px;font-size:12px;line-height:16px;color:#1a1a1a;">Nábytok</div>
<div class="a" style="left:446.00px;top:477.30px;width:47px;text-align:right;font-size:12px;line-height:16px;color:#1a1a1a;">2025</div>
<div class="a" style="left:508.50px;top:470.40px;font-size:12px;line-height:16px;color:#1a1a1a;">SKRIŇA DVEROVÁ, DVE</div>
<div class="a" style="left:508.50px;top:484.10px;font-size:12px;line-height:16px;color:#1a1a1a;">POLICE</div>
<div class="a" style="left:678.00px;top:477.30px;width:46px;text-align:right;font-size:12px;line-height:16px;color:#1a1a1a;">1</div>
<div class="a" style="left:740.50px;top:470.40px;font-size:12px;line-height:16px;color:#1a1a1a;">Chemické</div>
<div class="a" style="left:740.50px;top:484.10px;font-size:12px;line-height:16px;color:#1a1a1a;">laboratórium</div>
<div class="a" style="left:834.50px;top:477.30px;font-size:12px;line-height:16px;color:#1a1a1a;">Učiteľ 05</div>
<div class="a" style="left:240px;top:505px;width:937px;height:38px;background:#fbfbfb"></div>
<div class="a" style="left:240px;top:543px;width:938px;height:1px;background:#cfe5fa"></div>
<div class="a" style="left:240.00px;top:516.30px;width:43px;text-align:center;font-size:12px;line-height:16px;color:#1a1a1a;">9</div>
<div class="a" style="left:291.50px;top:516.30px;width:65.5px;text-align:left;font-size:12px;line-height:16px;color:#1a1a1a;overflow:hidden;">204</div>
<div class="a" style="left:365.50px;top:516.30px;font-size:12px;line-height:16px;color:#1a1a1a;">Nábytok</div>
<div class="a" style="left:446.00px;top:516.30px;width:47px;text-align:right;font-size:12px;line-height:16px;color:#1a1a1a;">2025</div>
<div class="a" style="left:508.50px;top:516.30px;font-size:12px;line-height:16px;color:#1a1a1a;">skriňa kovová</div>
<div class="a" style="left:678.00px;top:516.30px;width:46px;text-align:right;font-size:12px;line-height:16px;color:#1a1a1a;">1</div>
<div class="a" style="left:740.50px;top:509.40px;font-size:12px;line-height:16px;color:#1a1a1a;">Chemické</div>
<div class="a" style="left:740.50px;top:523.10px;font-size:12px;line-height:16px;color:#1a1a1a;">laboratórium</div>
<div class="a" style="left:834.50px;top:516.30px;font-size:12px;line-height:16px;color:#1a1a1a;">Učiteľ 05</div>
<div class="a" style="left:240px;top:544px;width:937px;height:38px;background:#ffffff"></div>
<div class="a" style="left:240px;top:582px;width:938px;height:1px;background:#cfe5fa"></div>
<div class="a" style="left:240.00px;top:555.30px;width:43px;text-align:center;font-size:12px;line-height:16px;color:#1a1a1a;">10</div>
<div class="a" style="left:291.50px;top:555.30px;width:65.5px;text-align:left;font-size:12px;line-height:16px;color:#1a1a1a;overflow:hidden;">208</div>
<div class="a" style="left:365.50px;top:555.30px;font-size:12px;line-height:16px;color:#1a1a1a;">Nábytok</div>
<div class="a" style="left:446.00px;top:555.30px;width:47px;text-align:right;font-size:12px;line-height:16px;color:#1a1a1a;">2025</div>
<div class="a" style="left:508.50px;top:555.30px;font-size:12px;line-height:16px;color:#1a1a1a;">skriňa kovová</div>
<div class="a" style="left:678.00px;top:555.30px;width:46px;text-align:right;font-size:12px;line-height:16px;color:#1a1a1a;">1</div>
<div class="a" style="left:740.50px;top:548.40px;font-size:12px;line-height:16px;color:#1a1a1a;">Chemické</div>
<div class="a" style="left:740.50px;top:562.10px;font-size:12px;line-height:16px;color:#1a1a1a;">laboratórium</div>
<div class="a" style="left:834.50px;top:555.30px;font-size:12px;line-height:16px;color:#1a1a1a;">Učiteľ 05</div>
<div class="a" style="left:240px;top:583px;width:937px;height:38px;background:#fbfbfb"></div>
<div class="a" style="left:240px;top:621px;width:938px;height:1px;background:#cfe5fa"></div>
<div class="a" style="left:240.00px;top:594.30px;width:43px;text-align:center;font-size:12px;line-height:16px;color:#1a1a1a;">11</div>
<div class="a" style="left:291.50px;top:594.30px;width:65.5px;text-align:left;font-size:12px;line-height:16px;color:#1a1a1a;overflow:hidden;">25103003</div>
<div class="a" style="left:365.50px;top:594.30px;font-size:12px;line-height:16px;color:#1a1a1a;">Nábytok</div>
<div class="a" style="left:446.00px;top:594.30px;width:47px;text-align:right;font-size:12px;line-height:16px;color:#1a1a1a;">2025</div>
<div class="a" style="left:508.50px;top:594.30px;font-size:12px;line-height:16px;color:#1a1a1a;">skriňa kovová</div>
<div class="a" style="left:678.00px;top:594.30px;width:46px;text-align:right;font-size:12px;line-height:16px;color:#1a1a1a;">1</div>
<div class="a" style="left:740.50px;top:587.40px;font-size:12px;line-height:16px;color:#1a1a1a;">Chemické</div>
<div class="a" style="left:740.50px;top:601.10px;font-size:12px;line-height:16px;color:#1a1a1a;">laboratórium</div>
<div class="a" style="left:834.50px;top:594.30px;font-size:12px;line-height:16px;color:#1a1a1a;">Učiteľ 05</div>
<div class="a" style="left:240px;top:622px;width:937px;height:38px;background:#ffffff"></div>
<div class="a" style="left:240px;top:660px;width:938px;height:1px;background:#cfe5fa"></div>
<div class="a" style="left:240.00px;top:633.30px;width:43px;text-align:center;font-size:12px;line-height:16px;color:#1a1a1a;">12</div>
<div class="a" style="left:291.50px;top:633.30px;width:65.5px;text-align:left;font-size:12px;line-height:16px;color:#1a1a1a;overflow:hidden;">FHWIFGHF</div>
<div class="a" style="left:365.50px;top:633.30px;font-size:12px;line-height:16px;color:#1a1a1a;">Nábytok</div>
<div class="a" style="left:446.00px;top:633.30px;width:47px;text-align:right;font-size:12px;line-height:16px;color:#1a1a1a;">2025</div>
<div class="a" style="left:508.50px;top:633.30px;font-size:12px;line-height:16px;color:#1a1a1a;">SKRIŇA VEĽKÁ</div>
<div class="a" style="left:678.00px;top:633.30px;width:46px;text-align:right;font-size:12px;line-height:16px;color:#1a1a1a;">1</div>
<div class="a" style="left:740.50px;top:626.40px;font-size:12px;line-height:16px;color:#1a1a1a;">Chemické</div>
<div class="a" style="left:740.50px;top:640.10px;font-size:12px;line-height:16px;color:#1a1a1a;">laboratórium</div>
<div class="a" style="left:834.50px;top:633.30px;font-size:12px;line-height:16px;color:#1a1a1a;">Učiteľ 05</div>
<div class="a" style="left:240px;top:661px;width:937px;height:33px;background:#fbfbfb"></div>
<div class="a" style="left:240px;top:694px;width:938px;height:1px;background:#cfe5fa"></div>
<div class="a" style="left:240.00px;top:669.80px;width:43px;text-align:center;font-size:12px;line-height:16px;color:#1a1a1a;">13</div>
<div class="a" style="left:291.50px;top:669.80px;width:65.5px;text-align:left;font-size:12px;line-height:16px;color:#1a1a1a;overflow:hidden;">25103009</div>
<div class="a" style="left:365.50px;top:669.80px;font-size:12px;line-height:16px;color:#1a1a1a;">Nábytok</div>
<div class="a" style="left:446.00px;top:669.80px;width:47px;text-align:right;font-size:12px;line-height:16px;color:#1a1a1a;"></div>
<div class="a" style="left:508.50px;top:669.80px;font-size:12px;line-height:16px;color:#1a1a1a;">skrinka dverová s policou</div>
<div class="a" style="left:678.00px;top:669.80px;width:46px;text-align:right;font-size:12px;line-height:16px;color:#1a1a1a;">3</div>
<div class="a" style="left:740.50px;top:669.80px;font-size:12px;line-height:16px;color:#1a1a1a;">K7</div>
<div class="a" style="left:834.50px;top:669.80px;font-size:12px;line-height:16px;color:#1a1a1a;">Učiteľ 05</div>
<div class="a" style="left:283px;top:213px;width:1px;height:485px;background:#cfe5fa"></div>
<div class="a" style="left:357px;top:213px;width:1px;height:485px;background:#cfe5fa"></div>
<div class="a" style="left:446px;top:213px;width:1px;height:485px;background:#cfe5fa"></div>
<div class="a" style="left:500px;top:213px;width:1px;height:485px;background:#cfe5fa"></div>
<div class="a" style="left:678px;top:213px;width:1px;height:485px;background:#cfe5fa"></div>
<div class="a" style="left:732px;top:213px;width:1px;height:485px;background:#cfe5fa"></div>
<div class="a" style="left:826px;top:213px;width:1px;height:485px;background:#cfe5fa"></div>
<div class="a" style="left:950px;top:213px;width:1px;height:485px;background:#cfe5fa"></div>
<div class="a" style="left:1011px;top:213px;width:1px;height:485px;background:#cfe5fa"></div>
<div class="a" style="left:1080px;top:213px;width:1px;height:485px;background:#cfe5fa"></div>
<div class="a" style="left:1177px;top:213px;width:1px;height:485px;background:#cfe5fa"></div>
<div class="a" style="left:1284px;top:213px;width:13px;height:485px;background:#fafafa"></div>
<svg style="left:1287px;top:218px" width="9" height="7" viewBox="0 0 9 7"><path d="M0 7 L4.5 0 L9 7Z" fill="#8a8a8a"/></svg>
<div class="a" style="left:1287px;top:231px;width:9px;height:59px;background:#8a8a8a;border-radius:4.5px"></div>
<svg style="left:1287px;top:688px" width="9" height="7" viewBox="0 0 9 7"><path d="M0 0 L4.5 7 L9 0Z" fill="#8a8a8a"/></svg>
<div class="a" style="left:0px;top:42px;width:1298px;height:4px;background:linear-gradient(rgba(0,0,0,.17),rgba(0,0,0,0))"></div></div></body></html>
